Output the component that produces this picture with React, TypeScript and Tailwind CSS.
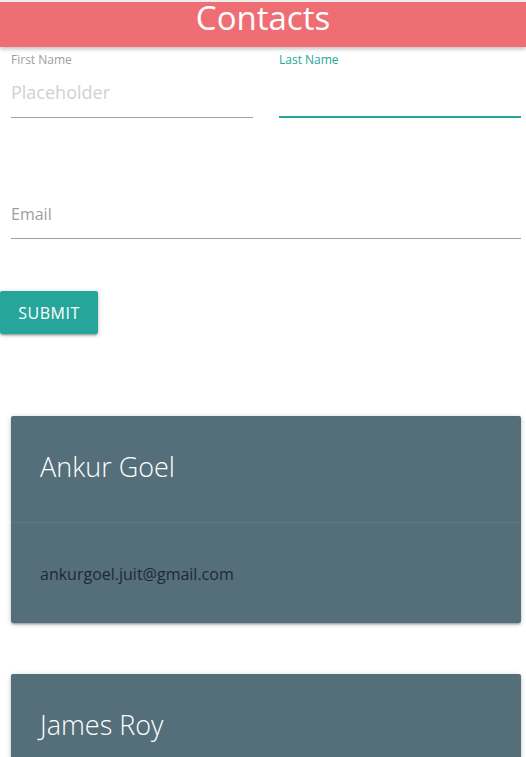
import React from "react";

const font = { fontFamily: '"Open Sans", "Noto Sans", sans-serif' };

function Card({ name, email }: { name: string; email?: string }) {
  return (
    <div className="ml-[11px] mr-[5px] bg-[#546e7a] rounded-[2px] shadow-[0_2px_2px_0_rgba(0,0,0,0.14),0_3px_1px_-2px_rgba(0,0,0,0.12),0_1px_5px_0_rgba(0,0,0,0.2)]">
      <div className="h-[107px] pl-[29px] pt-[33px] border-b border-[rgba(160,160,160,0.2)]">
        <div className="text-[27px] leading-[36px] font-light text-white">{name}</div>
      </div>
      <div className="h-[100px] pl-[29px] pt-[40px]">
        <div className="text-[16px] leading-[22px] text-[#1f2a30]">{email}</div>
      </div>
    </div>
  );
}

export default function App() {
  return (
    <div className="w-[526px] h-[757px] overflow-hidden bg-white" style={font}>
      <div className="pt-[2px] bg-[#f2f2f2]">
        <div className="h-[45px] bg-[#ee6e73] flex items-start justify-center shadow-[0_2px_4px_rgba(0,0,0,0.25)] relative z-10">
          <h1 className="text-[33px] leading-[31px] text-white">Contacts</h1>
        </div>
      </div>
      <div className="flex gap-[26px] pl-[11px] pr-[5px] pt-[5px]">
        <div className="flex-1">
          <div className="text-[12px] leading-[16px] text-[#9e9e9e]">First Name</div>
          <div className="h-[50px] border-b border-[#9e9e9e] flex items-center">
            <span className="text-[18px] text-[#d1d1d1] -mt-[1px]">Placeholder</span>
          </div>
        </div>
        <div className="flex-1">
          <div className="text-[12px] leading-[16px] text-[#26a69a]">Last Name</div>
          <div className="h-[50px] border-b-2 border-[#26a69a]"></div>
        </div>
      </div>
      <div className="pl-[11px] pr-[5px] pt-[85px]">
        <div className="h-[36px] border-b border-[#9e9e9e] flex items-start">
          <span className="text-[16px] leading-[22px] text-[#9e9e9e]">Email</span>
        </div>
      </div>
      <div className="pt-[52px]">
        <button className="h-[43px] w-[98px] bg-[#26a69a] text-white text-[16px] tracking-[0.5px] uppercase rounded-[2px] shadow-[0_2px_2px_0_rgba(0,0,0,0.14),0_3px_1px_-2px_rgba(0,0,0,0.12),0_1px_5px_0_rgba(0,0,0,0.2)]">
          Submit
        </button>
      </div>
      <div className="pt-[82px] flex flex-col gap-[51px]">
        <Card name="Ankur Goel" email="ankurgoel.juit@gmail.com" />
        <Card name="James Roy" />
      </div>
    </div>
  );
}
